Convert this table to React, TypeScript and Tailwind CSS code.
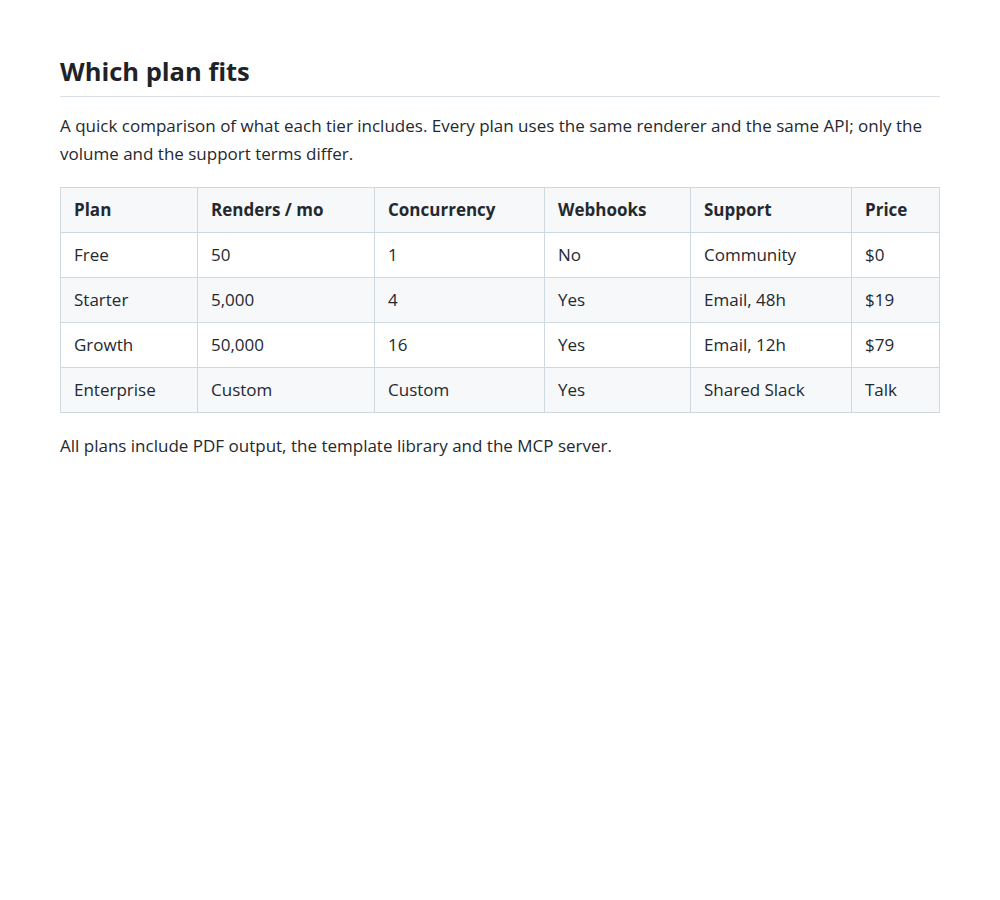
import React from "react";

const rows = [
  ["Free", "50", "1", "No", "Community", "$0"],
  ["Starter", "5,000", "4", "Yes", "Email, 48h", "$19"],
  ["Growth", "50,000", "16", "Yes", "Email, 12h", "$79"],
  ["Enterprise", "Custom", "Custom", "Yes", "Shared Slack", "Talk"],
];
const heads = ["Plan", "Renders / mo", "Concurrency", "Webhooks", "Support", "Price"];
const widths = ["w-[137px]", "w-[177px]", "w-[170px]", "w-[146px]", "w-[161px]", ""];

export default function App() {
  return (
    <div className="min-h-[900px] bg-white text-[#24292f]" style={{ fontFamily: '"Open Sans", sans-serif' }}>
      <div className="mx-[60px] pt-[55px]">
        <h2 className="border-b border-[#d8dee4] pb-[9px] text-[25.5px] font-bold leading-[32px] text-[#1f2328]">Which plan fits</h2>
        <p className="mt-[15px] text-[17px] leading-[28px]">
          A quick comparison of what each tier includes. Every plan uses the same renderer and the same API; only the volume and the support terms differ.
        </p>
        <table className="mt-[19px] w-full table-fixed border-collapse text-[17px] leading-[28px]">
          <colgroup>
            {widths.map((w, i) => (
              <col key={i} className={w} />
            ))}
          </colgroup>
          <thead>
            <tr className="bg-[#f6f8fa]">
              {heads.map((h) => (
                <th key={h} className="border border-[#d1d9e0] px-[13px] py-[8px] text-left font-bold">
                  {h}
                </th>
              ))}
            </tr>
          </thead>
          <tbody>
            {rows.map((r, i) => (
              <tr key={i} className={i % 2 === 1 ? "bg-[#f6f8fa]" : "bg-white"}>
                {r.map((c, j) => (
                  <td key={j} className="border border-[#d1d9e0] px-[13px] py-[8px]">
                    {c}
                  </td>
                ))}
              </tr>
            ))}
          </tbody>
        </table>
        <p className="mt-[19px] text-[17px] leading-[28px]">All plans include PDF output, the template library and the MCP server.</p>
      </div>
    </div>
  );
}
